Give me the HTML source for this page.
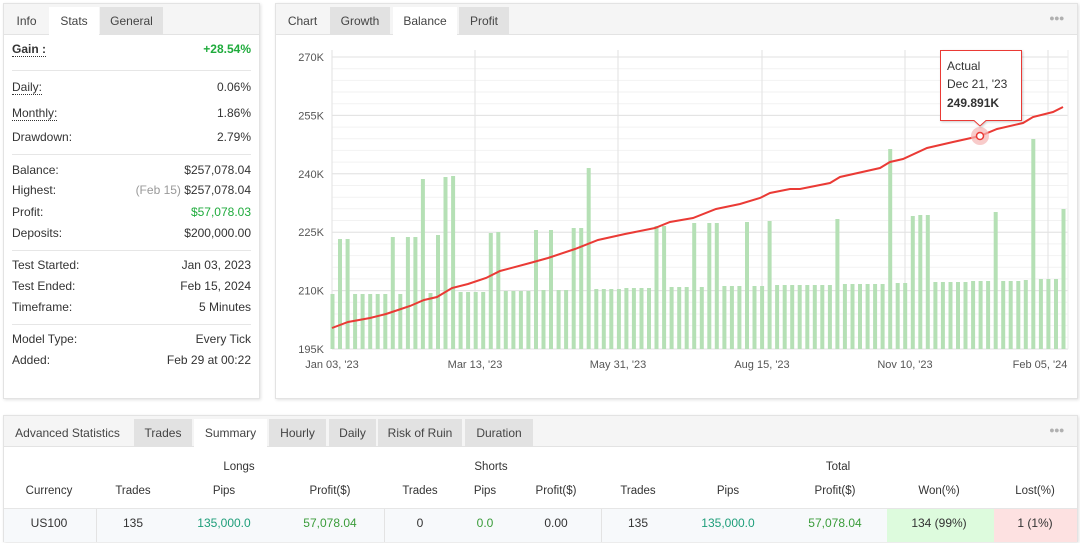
<!DOCTYPE html>
<html><head><meta charset="utf-8"><style>
*{box-sizing:border-box;margin:0;padding:0}
body{width:1080px;height:543px;background:#fff;font-family:"Liberation Sans",Arial,sans-serif;font-size:12px;color:#333;position:relative;overflow:hidden}
.panel{position:absolute;background:#fff;border:1px solid #e3e3e3;box-shadow:1px 1px 3px rgba(0,0,0,.12)}
.hdr{position:absolute;left:0;top:0;right:0;height:31px;background:#f5f5f5;border-bottom:1px solid #e3e3e3}
.tab{position:absolute;top:3px;height:28px;line-height:28px;text-align:center;background:#e2e2e2;color:#444}
.tab.act{background:#fff;height:29px}
.tab.plain{background:transparent}
.r{position:absolute;left:8px;right:8px;height:16px;line-height:16px}
.r .v{position:absolute;right:0;top:0}
.dot{border-bottom:1px dotted #333}
.sep{position:absolute;left:8px;right:8px;height:1px;background:#e6e6e6}
.t{position:absolute;text-align:center;transform:translateX(-50%);white-space:nowrap}
.dots{position:absolute;color:#b0b0b0;font-size:9px;letter-spacing:-0.5px}
</style></head><body>

<div class="panel" style="left:3px;top:3px;width:257px;height:396px">
 <div class="hdr"></div>
 <div class="tab plain" style="left:0;width:45px">Info</div>
 <div class="tab act" style="left:45px;width:50px">Stats</div>
 <div class="tab" style="left:96px;width:63px">General</div>
 <div class="r" style="top:37px"><span class="dot" style="font-weight:bold">Gain :</span><span class="v" style="color:#1fab3c;font-weight:bold">+28.54%</span></div>
 <div class="sep" style="top:66px"></div>
 <div class="r" style="top:75px"><span class="dot">Daily:</span><span class="v">0.06%</span></div>
 <div class="r" style="top:101px"><span class="dot">Monthly:</span><span class="v">1.86%</span></div>
 <div class="r" style="top:125px">Drawdown:<span class="v">2.79%</span></div>
 <div class="sep" style="top:150px"></div>
 <div class="r" style="top:158px">Balance:<span class="v">$257,078.04</span></div>
 <div class="r" style="top:178px">Highest:<span class="v"><span style="color:#999">(Feb 15)</span> $257,078.04</span></div>
 <div class="r" style="top:200px">Profit:<span class="v" style="color:#1fab3c">$57,078.03</span></div>
 <div class="r" style="top:221px">Deposits:<span class="v">$200,000.00</span></div>
 <div class="sep" style="top:246px"></div>
 <div class="r" style="top:253px">Test Started:<span class="v">Jan 03, 2023</span></div>
 <div class="r" style="top:274px">Test Ended:<span class="v">Feb 15, 2024</span></div>
 <div class="r" style="top:295px">Timeframe:<span class="v">5 Minutes</span></div>
 <div class="sep" style="top:320px"></div>
 <div class="r" style="top:327px">Model Type:<span class="v">Every Tick</span></div>
 <div class="r" style="top:348px">Added:<span class="v">Feb 29 at 00:22</span></div>
</div>

<div class="panel" style="left:275px;top:3px;width:803px;height:396px">
 <div class="hdr"></div>
 <div class="tab plain" style="left:0;width:53px">Chart</div>
 <div class="tab" style="left:54px;width:60px">Growth</div>
 <div class="tab act" style="left:117px;width:64px">Balance</div>
 <div class="tab" style="left:183px;width:50px">Profit</div>
 <div class="dots" style="right:13px;top:9px">●●●</div>
</div>
<svg id="ch" width="1080" height="400" style="position:absolute;left:0;top:0" font-family="Liberation Sans, Arial, sans-serif" font-size="11"></svg>

<div class="panel" style="left:3px;top:415px;width:1075px;height:127px">
 <div class="hdr"></div>
 <div class="tab plain" style="left:0;width:127px">Advanced Statistics</div>
 <div class="tab" style="left:130px;width:58px">Trades</div>
 <div class="tab act" style="left:190px;width:73px">Summary</div>
 <div class="tab" style="left:265px;width:57px">Hourly</div>
 <div class="tab" style="left:325px;width:47px">Daily</div>
 <div class="tab" style="left:374px;width:84px">Risk of Ruin</div>
 <div class="tab" style="left:461px;width:68px">Duration</div>
 <div class="dots" style="right:13px;top:9px">●●●</div>
 <div style="position:absolute;left:0;right:0;top:92px;height:34px;background:#f7f9fb;border-top:1px solid #e6e6e6"></div>
 <div style="position:absolute;left:883px;width:107px;top:93px;height:33px;background:#ddfbdd"></div>
 <div style="position:absolute;left:990px;right:0;top:93px;height:33px;background:#fde1e1"></div>
 <div style="position:absolute;left:92px;top:93px;width:1px;height:33px;background:#e3e3e3"></div>
 <div style="position:absolute;left:380px;top:93px;width:1px;height:33px;background:#e3e3e3"></div>
 <div style="position:absolute;left:597px;top:93px;width:1px;height:33px;background:#e3e3e3"></div>
</div>
<div style="position:absolute;left:0;top:0;font-size:11.5px">
 <div class="t" style="left:239px;top:461px">Longs</div>
 <div class="t" style="left:491px;top:461px">Shorts</div>
 <div class="t" style="left:838px;top:461px">Total</div>
 <div class="t" style="left:49px;top:485px">Currency</div>
 <div class="t" style="left:133px;top:485px">Trades</div>
 <div class="t" style="left:224px;top:485px">Pips</div>
 <div class="t" style="left:330px;top:485px">Profit($)</div>
 <div class="t" style="left:420px;top:485px">Trades</div>
 <div class="t" style="left:485px;top:485px">Pips</div>
 <div class="t" style="left:556px;top:485px">Profit($)</div>
 <div class="t" style="left:638px;top:485px">Trades</div>
 <div class="t" style="left:728px;top:485px">Pips</div>
 <div class="t" style="left:835px;top:485px">Profit($)</div>
 <div class="t" style="left:939px;top:485px">Won(%)</div>
 <div class="t" style="left:1035px;top:485px">Lost(%)</div>
</div>
<div style="position:absolute;left:0;top:0;font-size:12px">
 <div class="t" style="left:49px;top:516px">US100</div>
 <div class="t" style="left:133px;top:516px">135</div>
 <div class="t" style="left:224px;top:516px;color:#1e9e7a">135,000.0</div>
 <div class="t" style="left:330px;top:516px;color:#3a9c3a">57,078.04</div>
 <div class="t" style="left:420px;top:516px">0</div>
 <div class="t" style="left:485px;top:516px;color:#3a9c3a">0.0</div>
 <div class="t" style="left:556px;top:516px">0.00</div>
 <div class="t" style="left:638px;top:516px">135</div>
 <div class="t" style="left:728px;top:516px;color:#1e9e7a">135,000.0</div>
 <div class="t" style="left:835px;top:516px;color:#3a9c3a">57,078.04</div>
 <div class="t" style="left:939px;top:516px">134 (99%)</div>
 <div class="t" style="left:1035px;top:516px">1 (1%)</div>
</div>

<script>
var s='';
for(var y=57;y<=349;y+=58.4/5){s+='<line x1="332" x2="1068" y1="'+y.toFixed(1)+'" y2="'+y.toFixed(1)+'" stroke="#f2f2f2"/>';}
var labs=['270K','255K','240K','225K','210K','195K'];
for(var i=0;i<6;i++){var y=57+i*58.4;s+='<line x1="332" x2="1068" y1="'+y+'" y2="'+y+'" stroke="#e2e2e2"/>';s+='<text x="324" y="'+(y+4)+'" text-anchor="end" fill="#555">'+labs[i]+'</text>';}
var vx=[475,618,762,905,1048];vx.forEach(function(x){s+='<line x1="'+x+'" x2="'+x+'" y1="50" y2="349" stroke="#e2e2e2"/>';});
s+='<line x1="332" x2="332" y1="50" y2="349" stroke="#e2e2e2"/><line x1="1068" x2="1068" y1="50" y2="349" stroke="#eee"/>';
var xl=[[332,'Jan 03, \'23'],[475,'Mar 13, \'23'],[618,'May 31, \'23'],[762,'Aug 15, \'23'],[905,'Nov 10, \'23'],[1040,'Feb 05, \'24']];
xl.forEach(function(a){s+='<text x="'+a[0]+'" y="368" text-anchor="middle" fill="#555">'+a[1]+'</text>';});
var t=[294,239,239,294,294,294,294,294,237,294,237,237,179,293,235,177,176,292,292,292,292,233,232,291,291,291,291,230,290,230,290,290,228,228,168,289,289,289,289,288,288,288,288,226,226,287,287,287,223,287,223,223,286,286,286,222,286,286,221,285,285,285,285,285,285,285,285,219,284,284,284,284,284,284,149,283,283,216,215,215,282,282,282,282,282,281,281,281,212,281,281,281,280,139,279,279,279,209];
for(var i=0;i<t.length;i++){var x=332+i*7.536-1.5;s+='<rect x="'+x.toFixed(1)+'" y="'+t[i]+'" width="4" height="'+(349-t[i])+'" fill="#b5e0b5"/>';}
var p=[[332,328],[348,322],[370,318],[386,314],[398,310],[410,306],[424,300],[437,297],[452,288],[468,284],[486,278],[500,271],[530,263],[548,258],[575,249],[598,240],[625,234],[655,228],[670,222],[693,218],[716,209],[740,204],[760,198],[770,193],[790,189],[800,189],[830,183],[840,177],[880,168],[890,162],[903,159],[927,148],[953,142],[980,136],[997,129],[1023,123],[1033,117],[1053,112],[1063,107]];
s+='<polyline fill="none" stroke="#ea3a35" stroke-width="2" points="'+p.map(function(q){return q.join(',')}).join(' ')+'"/>';
s+='<circle cx="980" cy="136" r="9" fill="#f5b5b3" opacity=".7"/><circle cx="980" cy="136" r="3.5" fill="#fff" stroke="#ea3a35" stroke-width="1.5"/>';
s+='<path d="M940.5,50.5 H1021.5 V120.5 H986 L980,126 L974,120.5 H940.5 Z" fill="#fff" stroke="#ea3a35" stroke-width="1" style="filter:drop-shadow(1px 1px 1px rgba(0,0,0,.2))"/>';
s+='<text x="947" y="70" font-size="12" fill="#333">Actual</text><text x="947" y="88" font-size="12" fill="#333">Dec 21, \'23</text><text x="947" y="107" font-size="12" font-weight="bold" fill="#333">249.891K</text>';
document.getElementById('ch').innerHTML=s;
</script>
</body></html>
